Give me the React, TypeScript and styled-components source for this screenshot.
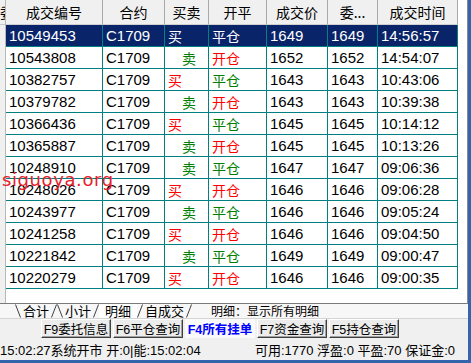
import React from "react";
import styled, { createGlobalStyle } from "styled-components";

const GlobalStyle = createGlobalStyle`
  html, body {
    margin: 0;
    padding: 0;
    background: #3464ac;
  }
  body {
    font-family: "Liberation Sans", "Noto Sans CJK SC", sans-serif;
  }
`;

type Trade = {
  id: string;
  side: "买" | "卖";
  flag: "开仓" | "平仓";
  price: string;
  order: string;
  time: string;
};

const trades: Trade[] = [
  { id: "10549453", side: "买", flag: "平仓", price: "1649", order: "1649", time: "14:56:57" },
  { id: "10543808", side: "卖", flag: "开仓", price: "1652", order: "1652", time: "14:54:07" },
  { id: "10382757", side: "买", flag: "平仓", price: "1643", order: "1643", time: "10:43:06" },
  { id: "10379782", side: "卖", flag: "开仓", price: "1643", order: "1643", time: "10:39:38" },
  { id: "10366436", side: "买", flag: "平仓", price: "1645", order: "1645", time: "10:14:12" },
  { id: "10365887", side: "卖", flag: "开仓", price: "1645", order: "1645", time: "10:13:26" },
  { id: "10248910", side: "卖", flag: "平仓", price: "1647", order: "1647", time: "09:06:36" },
  { id: "10248026", side: "买", flag: "开仓", price: "1646", order: "1646", time: "09:06:28" },
  { id: "10243977", side: "卖", flag: "平仓", price: "1646", order: "1646", time: "09:05:24" },
  { id: "10241258", side: "买", flag: "开仓", price: "1646", order: "1646", time: "09:04:50" },
  { id: "10221842", side: "卖", flag: "平仓", price: "1649", order: "1649", time: "09:00:47" },
  { id: "10220279", side: "买", flag: "开仓", price: "1646", order: "1646", time: "09:00:35" },
];

const headers = ["成交编号", "合约", "买卖", "开平", "成交价", "委...", "成交时间"];

const RED = "#ff0000";
const GREEN = "#008000";

const App: React.FC = () => {
  return (
    <>
      <GlobalStyle />
      <Window>
        <Client>
          <GridArea>
            <LeftStrip>
              <StripHead>
                <span>委</span>
              </StripHead>
            </LeftStrip>
            <Table>
              {headers.map((h) => (
                <HeadCell key={h}>{h}</HeadCell>
              ))}
              {trades.map((t, i) => {
                const sel = i === 0;
                const sideColor = t.side === "买" ? RED : GREEN;
                const flagColor = t.flag === "开仓" ? RED : GREEN;
                return (
                  <React.Fragment key={t.id}>
                    <Cell $sel={sel}>{t.id}</Cell>
                    <Cell $sel={sel}>C1709</Cell>
                    <Cell $sel={sel} $color={sideColor} $indent={t.side === "卖" ? 17 : 3}>
                      <Han>{t.side}</Han>
                    </Cell>
                    <Cell $sel={sel} $color={flagColor}>
                      <Han>{t.flag}</Han>
                    </Cell>
                    <Cell $sel={sel}>{t.price}</Cell>
                    <Cell $sel={sel}>{t.order}</Cell>
                    <Cell $sel={sel}>{t.time}</Cell>
                  </React.Fragment>
                );
              })}
            </Table>
            <Watermark>siguoya.org</Watermark>
          </GridArea>

          <TabRow>
            <TabEdge dir="down" />
            <TabLabel>合计</TabLabel>
            <TabEdge dir="up" />
            <TabEdge dir="down" />
            <TabLabel>小计</TabLabel>
            <TabEdge dir="up" />
            <TabLabel $active>明细</TabLabel>
            <TabEdge dir="up" />
            <TabLabel>自成交</TabLabel>
            <TabEdge dir="up" />
            <TabHint>明细：显示所有明细</TabHint>
          </TabRow>

          <ButtonRow>
            <ToolButton>F9委托信息</ToolButton>
            <ToolButton>F6平仓查询</ToolButton>
            <ToolButton $active>F4所有挂单</ToolButton>
            <ToolButton>F7资金查询</ToolButton>
            <ToolButton>F5持仓查询</ToolButton>
          </ButtonRow>

          <StatusBar>
            <StatusText>15:02:27系统开市 开:0|能:15:02:04</StatusText>
            <StatusRight>可用:1770 浮盈:0 平盈:70 保证金:0</StatusRight>
          </StatusBar>
        </Client>
      </Window>
    </>
  );
};

export default App;

const TabEdge: React.FC<{ dir: "up" | "down" }> = ({ dir }) => (
  <EdgeSvg width="6" height="14" viewBox="0 0 6 14">
    {dir === "down" ? (
      <line x1="0.5" y1="0.5" x2="5.5" y2="13.5" stroke="#404040" strokeWidth="1" />
    ) : (
      <line x1="0.5" y1="13.5" x2="5.5" y2="0.5" stroke="#404040" strokeWidth="1" />
    )}
  </EdgeSvg>
);

const Window = styled.div`
  width: 471px;
  height: 363px;
  box-sizing: border-box;
  padding: 0 3px 3px 0;
  background: #3464ac;
  overflow: hidden;
`;

const Client = styled.div`
  width: 468px;
  height: 360px;
  background: #f0f0f0;
  display: flex;
  flex-direction: column;
`;

const GridArea = styled.div`
  position: relative;
  height: 304px;
  flex: none;
  display: flex;
  background: #ffffff;
  border-right: 1px solid #8c8c8c;
  border-bottom: 1px solid #7a7a7a;
  box-sizing: border-box;
  overflow: hidden;
`;

const LeftStrip = styled.div`
  width: 6px;
  flex: none;
  background: #f0f0f0;
  border-right: 1px solid #b8b8b8;
  box-sizing: border-box;
`;

const StripHead = styled.div`
  height: 25px;
  overflow: hidden;
  border-bottom: 1px solid #c8c8c8;
  box-sizing: border-box;
  display: flex;
  align-items: center;
  justify-content: flex-end;
  font-family: "Noto Sans CJK SC", sans-serif;
  font-size: 14px;
  color: #000;

  span {
    margin-right: -9px;
  }
`;

const Table = styled.div`
  width: 452px;
  flex: none;
  display: grid;
  grid-template-columns: 97px 62px 44px 58px 61px 50px 80px;
  grid-auto-rows: 22px;
  grid-template-rows: 25px;
  align-content: start;
`;

const HeadCell = styled.div`
  background: #f0f0f0;
  border-right: 1px solid #a8a8a8;
  border-bottom: 1px solid #d0d0d0;
  box-sizing: border-box;
  display: flex;
  align-items: center;
  justify-content: center;
  font-family: "Noto Sans CJK SC", sans-serif;
  font-size: 14px;
  color: #000;
  white-space: nowrap;
`;

const Cell = styled.div<{ $sel?: boolean; $color?: string; $indent?: number }>`
  background: ${(p) => (p.$sel ? "#0a246a" : "#ffffff")};
  color: ${(p) => (p.$sel ? "#ffffff" : p.$color || "#000000")};
  border-right: 1px solid #008080;
  border-bottom: 1px solid #008080;
  box-sizing: border-box;
  display: flex;
  align-items: center;
  padding-left: ${(p) => p.$indent ?? 3}px;
  font-size: 15px;
  white-space: nowrap;
  overflow: hidden;
`;

const Han = styled.span`
  font-family: "Noto Sans CJK SC", sans-serif;
  font-size: 14px;
`;

const Watermark = styled.div`
  position: absolute;
  z-index: 2;
  left: 2px;
  top: 170px;
  font-family: "DejaVu Sans", sans-serif;
  font-size: 18px;
  line-height: 20px;
  letter-spacing: 0.6px;
  color: #e8202c;
  pointer-events: none;
`;

const TabRow = styled.div`
  height: 14px;
  flex: none;
  display: flex;
  align-items: center;
  padding-left: 15px;
  background: #f7f7f7;
  font-family: "Noto Sans CJK SC", sans-serif;
  font-size: 13px;
  line-height: 14px;
  color: #000;
`;

const EdgeSvg = styled.svg`
  display: block;
  flex: none;
`;

const TabLabel = styled.span<{ $active?: boolean }>`
  padding: 0 ${(p) => (p.$active ? "6px" : "2px")};
  background: ${(p) => (p.$active ? "#ffffff" : "transparent")};
`;

const TabHint = styled.span`
  margin-left: 19px;
  font-size: 12px;
`;

const ButtonRow = styled.div`
  height: 20px;
  flex: none;
  display: flex;
  align-items: flex-end;
  gap: 2px;
  padding-left: 41px;
  border-top: 1px solid #d4d4d4;
  box-sizing: border-box;
`;

const ToolButton = styled.div<{ $active?: boolean }>`
  width: 70px;
  height: 19px;
  box-sizing: border-box;
  display: flex;
  align-items: center;
  justify-content: center;
  font-family: "Liberation Sans", "Noto Sans CJK SC", sans-serif;
  font-size: 12.5px;
  white-space: nowrap;
  color: ${(p) => (p.$active ? "#0000ff" : "#000000")};
  font-weight: ${(p) => (p.$active ? 700 : 400)};
  background: ${(p) => (p.$active ? "#fafafa" : "#ececec")};
  border: 1px solid;
  border-color: ${(p) =>
    p.$active ? "#fafafa #fafafa #fafafa #fafafa" : "#ffffff #404040 #404040 #ffffff"};
  box-shadow: ${(p) => (p.$active ? "none" : "inset -1px -1px 0 #a0a0a0")};
`;

const StatusBar = styled.div`
  height: 22px;
  flex: none;
  display: flex;
  align-items: center;
  padding-right: 13px;
  font-family: "Liberation Sans", "Noto Sans CJK SC", sans-serif;
  font-size: 13px;
  color: #000;
  white-space: nowrap;
`;

const StatusText = styled.span``;

const StatusRight = styled.span`
  margin-left: auto;
`;
